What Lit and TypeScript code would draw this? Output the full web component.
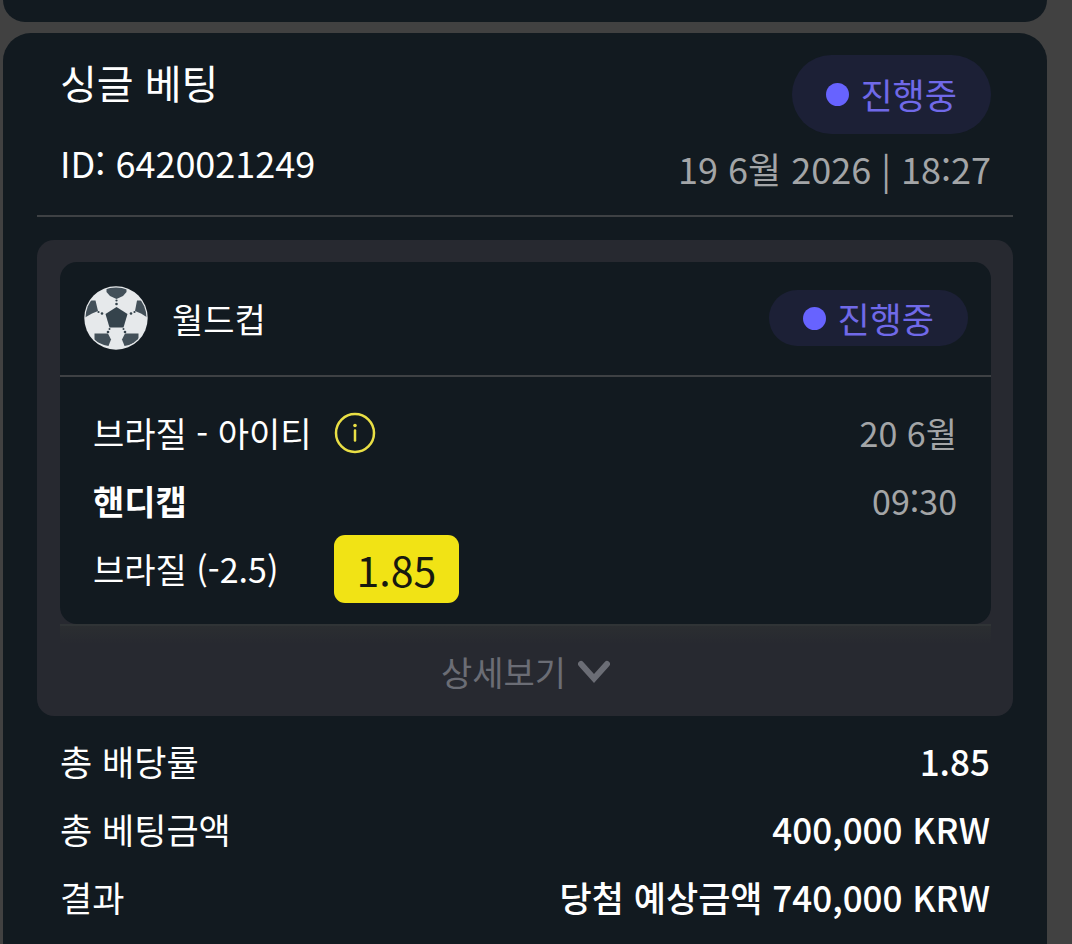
import { LitElement, html, css } from "lit";
import { customElement, property, state } from "lit/decorators.js";

@customElement("status-pill")
class StatusPill extends LitElement {
  @property() label = "";

  static styles = css`
    :host {
      display: flex;
      align-items: center;
      justify-content: center;
      gap: 11px;
      box-sizing: border-box;
      padding: 0 34px;
      border-radius: 40px;
      background: #1c2036;
      color: #7069e8;
      font-size: 35px;
      line-height: 56px;
      white-space: nowrap;
    }
    .dot {
      width: 23px;
      height: 23px;
      border-radius: 50%;
      background: #6763ff;
    }
  `;

  render() {
    return html`<span class="dot"></span><span>${this.label}</span>`;
  }
}

@customElement("app-root")
class AppRoot extends LitElement {
  @state() private expanded = false;

  private totals = [
    { label: "총 배당률", value: "1.85" },
    { label: "총 베팅금액", value: "400,000 KRW" },
    { label: "결과", value: "당첨 예상금액 740,000 KRW" },
  ];

  static styles = css`
    :host {
      display: flex;
      flex-direction: column;
      gap: 11px;
      box-sizing: border-box;
      min-height: 100vh;
      padding: 0 25px 0 3px;
      background: #414141;
      color: #fff;
      font-family: "Noto Sans CJK KR", "Noto Sans", sans-serif;
      font-size: 34px;
      line-height: 68px;
    }
    h1, h2, h3, p, dl, dd, dt {
      margin: 0;
      font-size: inherit;
      font-weight: 400;
    }
    button {
      padding: 0;
      border: 0;
      background: none;
      color: inherit;
      font: inherit;
      cursor: pointer;
    }
    svg {
      display: block;
    }
    .previous {
      height: 22px;
      border-radius: 0 0 28px 28px;
      background: #121a20;
    }
    .bet {
      flex: 1;
      padding: 22px 34px 0;
      border-radius: 28px 28px 0 0;
      background: #121a20;
    }
    .head {
      display: flex;
      justify-content: space-between;
      padding: 0 22px 0 23px;
      border-bottom: 2px solid #3e4144;
    }
    .title {
      font-size: 40px;
      line-height: 54px;
    }
    .id {
      margin-top: 27px;
      font-size: 36px;
      line-height: 52px;
    }
    .aside {
      display: flex;
      flex-direction: column;
      align-items: flex-end;
      padding-bottom: 21px;
    }
    .tall {
      padding-block: 11px 12px;
    }
    .date {
      margin-top: 8px;
      font-size: 36px;
      line-height: 52px;
    }
    .muted {
      color: #a3a5a7;
    }
    .details {
      margin-top: 23px;
      border-radius: 17px;
      background: #272930;
    }
    .event {
      margin: 0 22px 0 23px;
      border-radius: 17px;
      background: #121a20;
    }
    .frame {
      padding-top: 22px;
    }
    .event-head {
      display: flex;
      align-items: center;
      gap: 24px;
      padding: 24px 23px 25px 24px;
      border-bottom: 2px solid #3e4144;
    }
    .league {
      flex: 1;
      line-height: 63px;
    }
    .event-body {
      display: grid;
      grid-template-columns: auto auto 1fr;
      column-gap: 22px;
      align-items: center;
      padding: 22px 34px 21px 33px;
    }
    .time {
      justify-self: end;
    }
    .market {
      grid-column: 1 / 3;
      font-weight: 700;
    }
    .odds {
      grid-column: 2 / 4;
      justify-self: start;
      padding: 0 23px;
      border-radius: 11px;
      background: #f1e315;
      color: #17190f;
      font-size: 41px;
    }
    .more {
      display: flex;
      align-items: center;
      justify-content: center;
      gap: 12px;
      width: calc(100% - 45px);
      margin: 0 22px 0 23px;
      padding-top: 2px;
      border-top: 2px solid #303436;
      background: linear-gradient(#2b2e31, #272930 18px);
      color: #6b6d75;
      line-height: 88px;
    }
    .open {
      transform: rotate(180deg);
    }
    .totals {
      padding: 11px 23px;
    }
    .row {
      display: flex;
      justify-content: space-between;
      font-size: 35px;
    }
    .value {
      font-weight: 500;
    }
  `;

  private ball() {
    return html`<svg width="64" height="64" viewBox="0 0 64 64" aria-hidden="true">
      <defs><clipPath id="disc"><circle cx="32" cy="32" r="30.5" /></clipPath></defs>
      <circle cx="32" cy="32" r="31.7" fill="#e6e9eb" />
      <g clip-path="url(#disc)" fill="#435059">
        <path d="M22.5 0H42.5V6L39 10L32.5 13L26 10L22.5 6Z" />
        <path d="M0 14.5H11.5L14 25L8 27.5L0 32Z" />
        <path d="M64 14.5H53L51 25L57 27.5L64 32Z" />
        <path d="M10.500 47.500H24L27 53.500L24.500 60L20 59L10.500 55Z" />
        <path d="M54.500 47.500H41L38 53.500L40.500 60L45 59L54.500 55Z" />
      </g>
      <path d="M32.5 21L43.500 28L39.500 41.500H25.500L21.500 28Z" fill="#35434c" />
      <g fill="#35434c">
        <circle cx="32.500" cy="14.500" r="1.1" /><circle cx="32.500" cy="18" r="1.300" />
        <circle cx="14.500" cy="26" r="1.1" /><circle cx="18" cy="27.500" r="1.300" />
        <circle cx="50.500" cy="26" r="1.1" /><circle cx="47" cy="27.500" r="1.300" />
        <circle cx="24" cy="46" r="1.300" /><circle cx="25.500" cy="43" r="1" />
        <circle cx="41" cy="46" r="1.300" /><circle cx="39.500" cy="43" r="1" />
      </g>
    </svg>`;
  }

  render() {
    return html`
      <section class="previous"></section>
      <article class="bet" lang="ko">
        <header class="head">
          <div>
            <h1 class="title">싱글 베팅</h1>
            <p class="id">ID: 6420021249</p>
          </div>
          <div class="aside">
            <status-pill class="tall" label="진행중"></status-pill>
            <p class="date muted">19 6월 2026 | 18:27</p>
          </div>
        </header>

        <section class="details">
          <div class="frame">
            <div class="event">
              <div class="event-head">
                ${this.ball()}
                <h2 class="league">월드컵</h2>
                <status-pill label="진행중"></status-pill>
              </div>
              <div class="event-body">
                <h3>브라질 - 아이티</h3>
                <button aria-label="경기 정보">
                  <svg width="42" height="42" viewBox="0 0 42 42" aria-hidden="true">
                    <circle cx="21" cy="21" r="19" fill="none" stroke="#e9df45" stroke-width="2.5" />
                    <circle cx="21" cy="13.5" r="1.8" fill="#e9df45" />
                    <path d="M21 18.5V28.5" stroke="#e9df45" stroke-width="2.5" stroke-linecap="round" />
                  </svg>
                </button>
                <span class="time muted">20 6월</span>
                <p class="market">핸디캡</p>
                <span class="time muted">09:30</span>
                <p>브라질 (-2.5)</p>
                <span class="odds">1.85</span>
              </div>
            </div>
          </div>
          <button class="more" aria-expanded=${this.expanded} @click=${() => (this.expanded = !this.expanded)}>
            <span>상세보기</span>
            <svg class=${this.expanded ? "open" : ""} width="32" height="26" viewBox="0 0 32 26" aria-hidden="true">
              <path d="M3 5L16 19.500L29 5" fill="none" stroke="#6b6d75" stroke-width="6"
                stroke-linecap="round" stroke-linejoin="miter" />
            </svg>
          </button>
        </section>

        <dl class="totals">
          ${this.totals.map(
            (t) => html`<div class="row">
              <dt>${t.label}</dt>
              <dd class="value">${t.value}</dd>
            </div>`
          )}
        </dl>
      </article>
    `;
  }
}
